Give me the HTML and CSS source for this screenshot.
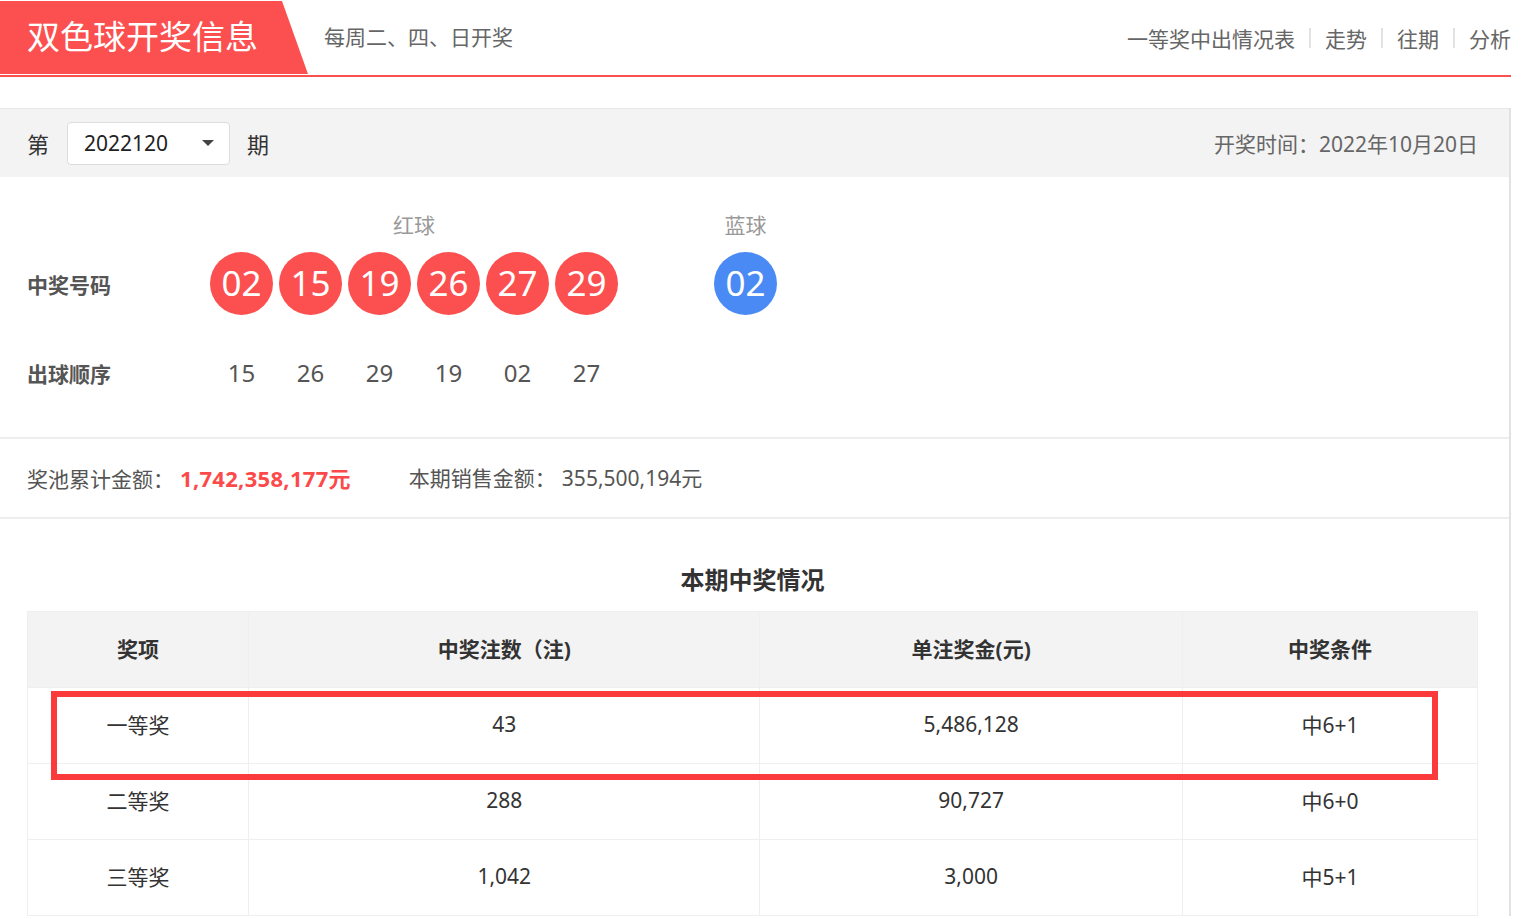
FILE: index.html
```html
<!DOCTYPE html>
<html lang="zh-CN">
<head>
  <meta charset="UTF-8">
  <title>双色球开奖信息</title>
  <link rel="stylesheet" href="styles.css">
</head>
<body>
  <div class="page">

    <!-- cabecera -->
    <div class="top">
      <div class="tab">双色球开奖信息</div>
      <div class="sub">每周二、四、日开奖</div>
      <div class="nav">
        <a href="#">一等奖中出情况表</a>
        <span class="sep"></span>
        <a href="#">走势</a>
        <span class="sep"></span>
        <a href="#">往期</a>
        <span class="sep"></span>
        <a href="#">分析</a>
      </div>
    </div>

    <div class="card">
      <div class="issue-bar">
        <div class="issue">
          <span>第</span>
          <div class="select">2022120<span class="caret"></span></div>
          <span>期</span>
        </div>
        <div class="date">开奖时间：2022年10月20日</div>
      </div>

      <div class="draw">
        <div class="draw-head">
          <div class="label"></div>
          <div class="red-title">红球</div>
          <div class="blue-title">蓝球</div>
        </div>
        <div class="draw-row">
          <div class="label">中奖号码</div>
          <div class="balls">
            <span class="ball">02</span>
            <span class="ball">15</span>
            <span class="ball">19</span>
            <span class="ball">26</span>
            <span class="ball">27</span>
            <span class="ball">29</span>
          </div>
          <div class="balls blue">
            <span class="ball">02</span>
          </div>
        </div>
        <div class="draw-row order">
          <div class="label">出球顺序</div>
          <div class="balls">
            <span class="num">15</span>
            <span class="num">26</span>
            <span class="num">29</span>
            <span class="num">19</span>
            <span class="num">02</span>
            <span class="num">27</span>
          </div>
        </div>
      </div>

      <div class="pool">
        <div class="pool-item">奖池累计金额：<span class="money">1,742,358,177元</span></div>
        <div class="pool-item">本期销售金额：<span class="sales">355,500,194元</span></div>
      </div>

      <div class="result">
        <h3>本期中奖情况</h3>
        <div class="table-wrap">
          <table class="prize-table">
            <thead>
              <tr>
                <th class="c1">奖项</th>
                <th class="c2">中奖注数（注)</th>
                <th class="c3">单注奖金(元)</th>
                <th class="c4">中奖条件</th>
              </tr>
            </thead>
            <tbody>
              <tr>
                <td>一等奖</td>
                <td>43</td>
                <td>5,486,128</td>
                <td>中6+1</td>
              </tr>
              <tr>
                <td>二等奖</td>
                <td>288</td>
                <td>90,727</td>
                <td>中6+0</td>
              </tr>
              <tr>
                <td>三等奖</td>
                <td>1,042</td>
                <td>3,000</td>
                <td>中5+1</td>
              </tr>
            </tbody>
          </table>
          <!-- recuadro rojo marcado a mano -->
          <div class="mark"></div>
        </div>
      </div>
    </div>

  </div>
</body>
</html>
```

FILE: styles.css
```css
body {
  margin: 0;
  background-color: #ffffff;
  font-family: "Noto Sans", "Noto Sans CJK SC", sans-serif;
  color: #333;
}

.page {
  width: 1511px;
}

/* cabecera */
.top {
  display: flex;
  align-items: flex-start;
  height: 74px;
  padding-top: 1px;
  border-bottom: 2px solid #fa5050;
}

.tab {
  width: 308px;
  height: 73px;
  box-sizing: border-box;
  padding-left: 27px;
  background-color: #fc5050;
  color: #ffffff;
  font-size: 33px;
  line-height: 72px;
  clip-path: polygon(0 0, 282px 0, 308px 100%, 0 100%);
}

.sub {
  margin-left: 16px;
  font-size: 21px;
  line-height: 73px;
  color: #666;
}

.nav {
  margin-left: auto;
  display: flex;
  align-items: center;
  height: 73px;
}

.nav a {
  font-size: 21px;
  color: #666;
  text-decoration: none;
}

.sep {
  width: 2px;
  height: 20px;
  margin: 0 14px;
  background-color: #e2e2e2;
}

/* tarjeta principal */
.card {
  margin-top: 31px;
  border-top: 1px solid #e6e6e6;
  border-right: 2px solid #e2e2e2;
}

.issue-bar {
  display: flex;
  align-items: center;
  justify-content: space-between;
  height: 68px;
  padding: 0 31px 0 27px;
  background-color: #f3f3f3;
}

.issue {
  display: flex;
  align-items: center;
  font-size: 22px;
  color: #333;
}

.select {
  display: flex;
  align-items: center;
  justify-content: space-between;
  width: 163px;
  height: 43px;
  box-sizing: border-box;
  margin: 0 17px 0 18px;
  padding: 0 15px 0 16px;
  background-color: #ffffff;
  border: 1px solid #dddddd;
  border-radius: 4px;
  font-size: 21px;
  color: #222;
}

.caret {
  width: 0;
  height: 0;
  border-left: 6px solid transparent;
  border-right: 6px solid transparent;
  border-top: 6px solid #444;
}

.date {
  font-size: 21px;
  color: #666;
}

/* bolas */
.draw {
  padding: 36px 0 49px 27px;
  border-bottom: 2px solid #eeeeee;
}

.draw-head,
.draw-row {
  display: flex;
  align-items: center;
}

.label {
  width: 183px;
  font-size: 21px;
  font-weight: bold;
  color: #555;
}

.red-title,
.blue-title {
  font-size: 21px;
  line-height: 24px;
  color: #999;
  text-align: center;
}

.red-title {
  width: 408px;
}

.blue-title {
  width: 63px;
  margin-left: 96px;
}

.draw-row {
  margin-top: 15px;
}

.balls {
  display: flex;
  gap: 6px;
}

.balls.blue {
  margin-left: 96px;
}

.ball {
  width: 63px;
  height: 63px;
  border-radius: 50%;
  background-color: #fc5050;
  color: #ffffff;
  font-size: 35px;
  line-height: 61px;
  text-align: center;
}

.blue .ball {
  background-color: #4a8af4;
}

.draw-row.order {
  margin-top: 43px;
}

.num {
  width: 63px;
  font-size: 24px;
  line-height: 28px;
  color: #555;
  text-align: center;
}

/* bote */
.pool {
  display: flex;
  align-items: center;
  height: 76px;
  padding: 0 27px 2px;
  border-bottom: 2px solid #eeeeee;
  font-size: 21px;
  color: #555;
}

.pool-item {
  margin-right: 58px;
}

.money {
  margin-left: 6px;
  color: #fc4a4a;
  font-weight: bold;
  font-size: 22px;
  letter-spacing: 0.3px;
}

.sales {
  margin-left: 6px;
  color: #555;
}

/* tabla de premios */
.result {
  padding: 0 31px 0 27px;
}

h3 {
  margin: 0;
  padding-top: 48px;
  margin-bottom: 18px;
  font-size: 24px;
  line-height: 26px;
  text-align: center;
  color: #333;
}

.table-wrap {
  position: relative;
}

.prize-table {
  width: 1451px;
  border-collapse: collapse;
  border: 1px solid #ececec;
  font-size: 21px;
  color: #333;
}

.prize-table th,
.prize-table td {
  height: 71px;
  padding: 0 0 4px;
  text-align: center;
  border: 1px solid #efefef;
}

.prize-table th {
  background-color: #f3f3f3;
  font-weight: bold;
}

.c1 { width: 221px; }
.c2 { width: 512px; }
.c3 { width: 423px; }
.c4 { width: 295px; }

.mark {
  position: absolute;
  left: 24px;
  top: 80px;
  width: 1387px;
  height: 89px;
  box-sizing: border-box;
  border: 6px solid #fb3b3b;
}
```
